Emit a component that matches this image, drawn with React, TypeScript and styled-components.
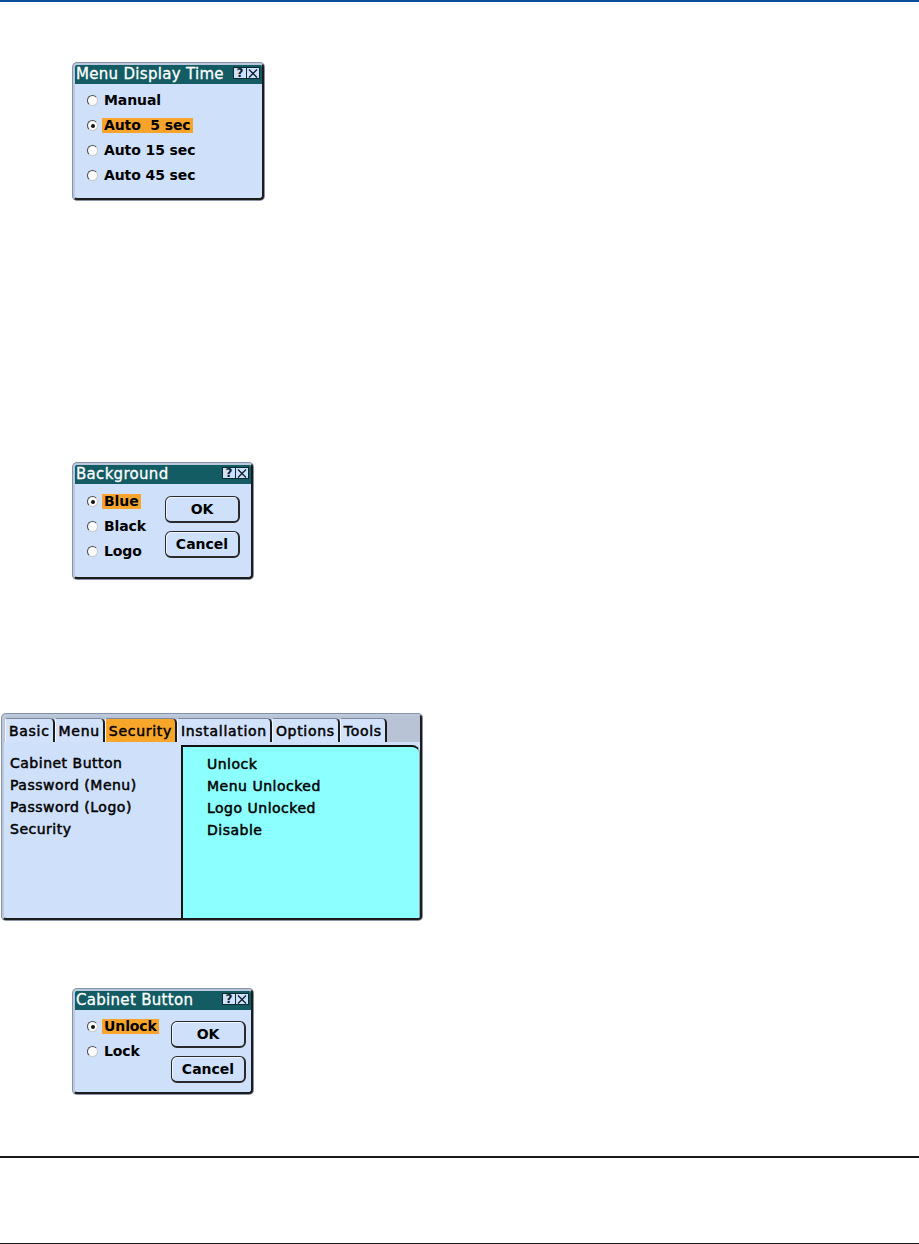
import React, { Fragment } from 'react';
import styled, { createGlobalStyle } from 'styled-components';

const GlobalStyle = createGlobalStyle`
	html, body {
		margin: 0;
		padding: 0;
		background: #ffffff;
	}
	body {
		font-family: "DejaVu Sans", "Liberation Sans", sans-serif;
		color: #000000;
	}
`;

const Page = styled.div`
	width: 919px;
	height: 1244px;
	overflow: hidden;
	display: flex;
	flex-direction: column;
`;

const TopRule = styled.div`
	height: 2px;
	background: #0b4f99;
	flex-shrink: 0;
`;

const Rule = styled.div<{ $gap: number }>`
	height: 2px;
	background: #1a1a1a;
	margin-top: ${(p) => p.$gap}px;
	flex-shrink: 0;
`;

const Block = styled.div<{ $gap: number; $indent: number }>`
	margin-top: ${(p) => p.$gap}px;
	padding-left: ${(p) => p.$indent}px;
	flex-shrink: 0;
`;

const Frame = styled.div<{ $w: number; $h: number }>`
	box-sizing: border-box;
	width: ${(p) => p.$w}px;
	height: ${(p) => p.$h}px;
	display: flex;
	flex-direction: column;
	background: #cfe0fb;
	border: 2px solid;
	border-color: #bcc8dc #1c1c1c #1c1c1c #bcc8dc;
	border-radius: 4px;
	box-shadow: 0 0 0 1px #8792a6;
	overflow: hidden;
`;

const TitleBar = styled.div`
	height: 19px;
	display: flex;
	align-items: flex-start;
	background: #135c64;
	color: #ffffff;
	padding: 0 2px 0 1px;
	flex-shrink: 0;
`;

const TitleText = styled.div`
	flex: 1;
	font-size: 15px;
	line-height: 19px;
	letter-spacing: 0.3px;
	-webkit-text-stroke: 0.3px #ffffff;
	white-space: nowrap;
`;

const TitleBtn = styled.div`
	box-sizing: border-box;
	width: 14px;
	height: 12px;
	margin-top: 2px;
	background: #cfe0fb;
	border: 1px solid #0c2a30;
	display: flex;
	align-items: center;
	justify-content: center;
	color: #0b1f2a;
	font-size: 12px;
	font-weight: bold;
	line-height: 10px;

	& + & {
		border-left: none;
		width: 13px;
	}
`;

const Body = styled.div`
	display: flex;
	align-items: flex-start;
	padding: 0 12px;
`;

const RadioList = styled.div<{ $top: number; $w?: number }>`
	padding-top: ${(p) => p.$top}px;
	width: ${(p) => (p.$w ? `${p.$w}px` : 'auto')};
	flex-shrink: 0;
`;

const RadioRow = styled.div`
	height: 25px;
	display: flex;
	align-items: center;
	gap: 4px;
`;

const RadioDot = styled.span<{ $on: boolean }>`
	box-sizing: border-box;
	width: 11px;
	height: 11px;
	border-radius: 50%;
	background: #ffffff;
	border: 1px solid;
	border-color: #4a4a4a #c8c8c8 #c8c8c8 #4a4a4a;
	display: flex;
	align-items: center;
	justify-content: center;

	&::after {
		content: '';
		width: 4px;
		height: 4px;
		border-radius: 50%;
		background: ${(p) => (p.$on ? '#111111' : 'transparent')};
	}
`;

const RadioLabel = styled.span<{ $on: boolean }>`
	font-size: 14px;
	font-weight: bold;
	letter-spacing: -0.1px;
	line-height: 15px;
	padding: 0 2px;
	white-space: pre;
	background: ${(p) => (p.$on ? '#f8a42c' : 'transparent')};
`;

const ButtonCol = styled.div<{ $top: number }>`
	padding-top: ${(p) => p.$top}px;
	display: flex;
	flex-direction: column;
	gap: 8px;
`;

const Button = styled.div`
	box-sizing: border-box;
	width: 75px;
	height: 27px;
	border: 1px solid #2a2a2a;
	border-right-width: 2px;
	border-bottom-width: 2px;
	border-radius: 6px;
	background: #cfe0fb;
	box-shadow: inset 1px 1px 0 #eef4ff;
	display: flex;
	align-items: center;
	justify-content: center;
	font-size: 14px;
	font-weight: bold;
`;

const TabStrip = styled.div`
	height: 26px;
	display: flex;
	align-items: flex-end;
	padding-left: 1px;
	background: #b8c3d5;
	flex-shrink: 0;
`;

const Tab = styled.div<{ $active?: boolean }>`
	box-sizing: border-box;
	height: 24px;
	padding: 0 3px 0 3px;
	display: flex;
	align-items: center;
	background: ${(p) => (p.$active ? '#f8a62a' : '#d2e2fa')};
	border-top: 1px solid #7f8aa0;
	border-left: 1px solid #f2f7ff;
	border-right: 2px solid #1c1c1c;
	border-top-left-radius: 2px;
	border-top-right-radius: 5px;
	font-size: 14px;
	letter-spacing: 0.7px;
	-webkit-text-stroke: 0.5px #000000;
	white-space: nowrap;
`;

const Panels = styled.div`
	flex: 1;
	display: flex;
`;

const LeftPanel = styled.div`
	width: 177px;
	padding: 10px 0 0 6px;
	box-sizing: border-box;
	flex-shrink: 0;
`;

const RightPanel = styled.div`
	flex: 1;
	margin-top: 3px;
	padding: 6px 0 0 24px;
	background: #8cffff;
	border-left: 2px solid #111111;
	border-top: 2px solid #111111;
	border-right: 1px solid #9aa2a8;
	border-top-right-radius: 8px;
`;

const Item = styled.div`
	height: 22px;
	line-height: 22px;
	font-size: 14px;
	letter-spacing: 0.5px;
	-webkit-text-stroke: 0.5px #000000;
	white-space: nowrap;
`;

function CloseIcon() {
	return (
		<svg width="10" height="9" viewBox="0 0 10 9">
			<path d="M1 0.5 L9 8.5 M9 0.5 L1 8.5" stroke="#0b1f2a" strokeWidth="1.3" />
		</svg>
	);
}

function Title({ text }: { text: string }) {
	return (
		<TitleBar>
			<TitleText>{text}</TitleText>
			<TitleBtn>?</TitleBtn>
			<TitleBtn>
				<CloseIcon />
			</TitleBtn>
		</TitleBar>
	);
}

function Radios({ items, selected, top, width }: { items: string[]; selected: number; top: number; width?: number }) {
	return (
		<RadioList $top={top} $w={width}>
			{items.map((label, i) => (
				<RadioRow key={label}>
					<RadioDot $on={i === selected} />
					<RadioLabel $on={i === selected}>{label}</RadioLabel>
				</RadioRow>
			))}
		</RadioList>
	);
}

function OkCancel({ top }: { top: number }) {
	return (
		<ButtonCol $top={top}>
			<Button>OK</Button>
			<Button>Cancel</Button>
		</ButtonCol>
	);
}

const tabs = ['Basic', 'Menu', 'Security', 'Installation', 'Options', 'Tools'];
const settings = ['Cabinet Button', 'Password (Menu)', 'Password (Logo)', 'Security'];
const values = ['Unlock', 'Menu Unlocked', 'Logo Unlocked', 'Disable'];

function App() {
	return (
		<Fragment>
			<GlobalStyle />
			<Page>
				<TopRule />

				<Block $gap={61} $indent={73}>
					<Frame $w={191} $h={137}>
						<Title text="Menu Display Time" />
						<Body>
							<Radios items={['Manual', 'Auto  5 sec', 'Auto 15 sec', 'Auto 45 sec']} selected={1} top={4} />
						</Body>
					</Frame>
				</Block>

				<Block $gap={263} $indent={73}>
					<Frame $w={180} $h={116}>
						<Title text="Background" />
						<Body>
							<Radios items={['Blue', 'Black', 'Logo']} selected={0} top={5} width={78} />
							<OkCancel top={12} />
						</Body>
					</Frame>
				</Block>

				<Block $gap={135} $indent={2}>
					<Frame $w={420} $h={206}>
						<TabStrip>
							{tabs.map((t) => (
								<Tab key={t} $active={t === 'Security'}>
									{t}
								</Tab>
							))}
						</TabStrip>
						<Panels>
							<LeftPanel>
								{settings.map((s) => (
									<Item key={s}>{s}</Item>
								))}
							</LeftPanel>
							<RightPanel>
								{values.map((v) => (
									<Item key={v}>{v}</Item>
								))}
							</RightPanel>
						</Panels>
					</Frame>
				</Block>

				<Block $gap={69} $indent={73}>
					<Frame $w={180} $h={105}>
						<Title text="Cabinet Button" />
						<Body>
							<Radios items={['Unlock', 'Lock']} selected={0} top={4} width={84} />
							<OkCancel top={11} />
						</Body>
					</Frame>
				</Block>

				<Rule $gap={62} />
				<Rule $gap={85} />
			</Page>
		</Fragment>
	);
}

export default App;
